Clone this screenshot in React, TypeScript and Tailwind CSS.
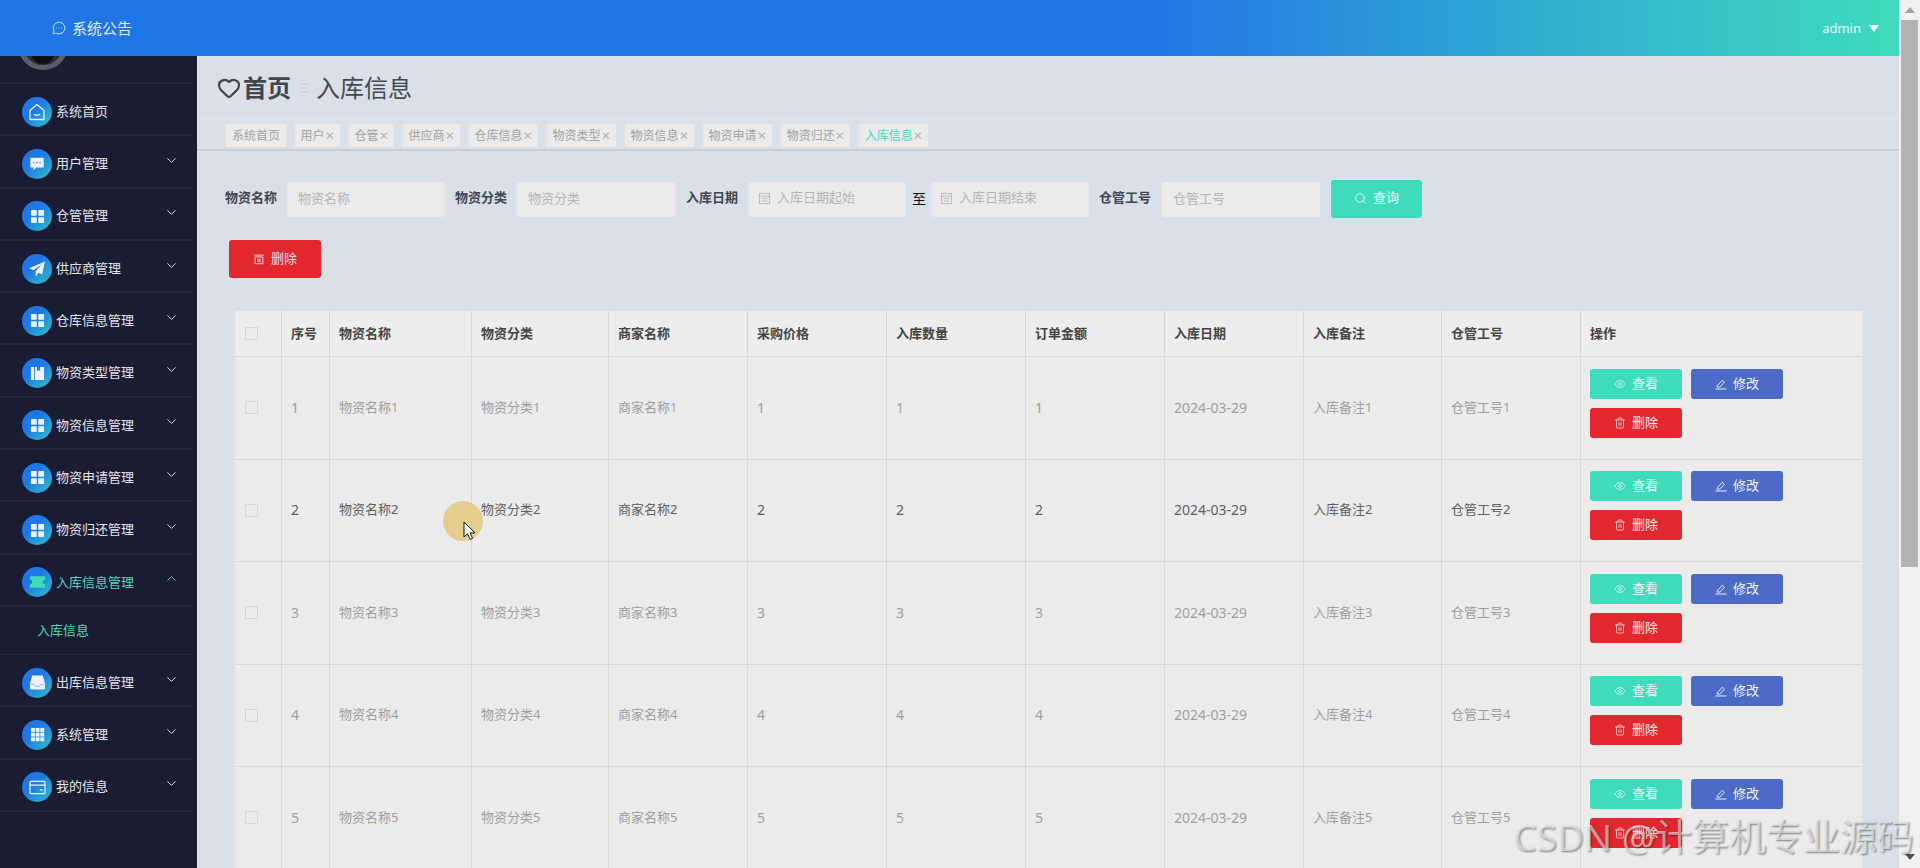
import { ReactNode } from "react"
import { ChevronDown, ChevronUp, Eye, Heart, MessageCircleMore, Search, Trash2 } from "lucide-react"

const GridIcon = () => (
  <svg viewBox="0 0 16 16" className="h-[15px] w-[15px]" fill="#eef3fb">
    <rect x="1" y="1" width="6.2" height="6.2" rx="0.8" />
    <rect x="8.8" y="1" width="6.2" height="6.2" rx="0.8" />
    <rect x="1" y="8.8" width="6.2" height="6.2" rx="0.8" />
    <rect x="8.8" y="8.8" width="6.2" height="6.2" rx="0.8" />
  </svg>
)

const HomeIcon = () => (
  <svg viewBox="0 0 18 18" className="h-[18px] w-[18px]" fill="none" stroke="#eef3fb" strokeWidth="1.3">
    <path d="M9 1.5 16 7.5V16.5H2V7.5Z" strokeLinejoin="round" />
    <path d="M6.5 11.5c1.2 1 3.8 1 5 0" strokeLinecap="round" />
  </svg>
)

const ChatIcon = () => (
  <svg viewBox="0 0 18 18" className="h-[16px] w-[16px]">
    <path d="M1.5 2h15v11H8l-3 3.2V13H1.5Z" fill="#eef3fb" />
    <circle cx="5.5" cy="7.5" r="0.9" fill="#5c8fd8" />
    <circle cx="9" cy="7.5" r="0.9" fill="#5c8fd8" />
    <circle cx="12.5" cy="7.5" r="0.9" fill="#5c8fd8" />
  </svg>
)

const PlaneIcon = () => (
  <svg viewBox="0 0 18 18" className="h-[18px] w-[18px]" fill="#eef3fb">
    <path d="M17 1.5 1 8.2l4.6 2.1L14 4.2 7.6 11.3v5.2l2.9-3.7 3.6 1.8Z" />
  </svg>
)

const BookIcon = () => (
  <svg viewBox="0 0 16 16" className="h-[15px] w-[15px]" fill="#eef3fb">
    <path d="M1 1h3.4v14H1Z" />
    <path d="M5.4 1h2v4.5l1.7-1.3 1.7 1.3V1H15v14H5.4Z" />
  </svg>
)

const TicketIcon = () => (
  <svg viewBox="0 0 18 14" className="h-[14px] w-[17px]" fill="#3edcbc">
    <path d="M1 1h16v3.5a2.5 2.5 0 0 0 0 5V13H1V9.5a2.5 2.5 0 0 0 0-5Z" />
  </svg>
)

const InboxIcon = () => (
  <svg viewBox="0 0 18 18" className="h-[17px] w-[17px]" fill="#eef3fb">
    <path d="M3.4 1.5h11.2L17 10v5a1.5 1.5 0 0 1-1.5 1.5h-13A1.5 1.5 0 0 1 1 15v-5Z" />
    <path d="M1.5 11h4l1 2h5l1-2h4" fill="none" stroke="#7aa7e0" strokeWidth="0.8" />
  </svg>
)

const NineIcon = () => (
  <svg viewBox="0 0 16 16" className="h-[15px] w-[15px]" fill="#eef3fb">
    {[1, 6, 11].map((y) =>
      [1, 6, 11].map((x) => <rect key={`${x}-${y}`} x={x} y={y} width="4.2" height="4.2" />)
    )}
  </svg>
)

const CardIcon = () => (
  <svg viewBox="0 0 18 16" className="h-[15px] w-[17px]" fill="none" stroke="#eef3fb" strokeWidth="1.3">
    <rect x="1" y="1.5" width="16" height="13" rx="1" />
    <path d="M1 5.5h16M11.5 10.5h3" />
  </svg>
)

const PenIcon = () => (
  <svg viewBox="0 0 14 14" className="h-[12px] w-[12px]" fill="none" stroke="currentColor" strokeWidth="1.1">
    <path d="M2.5 9.2 8.6 2.6l2.4 2.2L5.6 10.6H2.4Z" strokeLinejoin="round" />
    <path d="M1 12.8h12" strokeLinecap="round" />
  </svg>
)

const BinIcon = () => (
  <svg viewBox="0 0 14 14" className="h-[12px] w-[12px]" fill="none" stroke="currentColor" strokeWidth="1.1">
    <path d="M1.5 2.5h11M2.5 4.5h9v8h-9Z" />
    <path d="M5 6.5h4v4H5Z" fill="currentColor" stroke="none" opacity="0.7" />
  </svg>
)

const DateIcon = () => (
  <svg viewBox="0 0 14 14" className="h-[13px] w-[13px] shrink-0" fill="none" stroke="#b8b8b8" strokeWidth="1">
    <rect x="1.5" y="1.5" width="11" height="11" />
    <path d="M1.5 4.5h11M4 7h6M4 9.7h6" />
  </svg>
)

const menus: { label: string; icon: ReactNode; open?: boolean; leaf?: boolean }[] = [
  { label: "系统首页", icon: <HomeIcon />, leaf: true },
  { label: "用户管理", icon: <ChatIcon /> },
  { label: "仓管管理", icon: <GridIcon /> },
  { label: "供应商管理", icon: <PlaneIcon /> },
  { label: "仓库信息管理", icon: <GridIcon /> },
  { label: "物资类型管理", icon: <BookIcon /> },
  { label: "物资信息管理", icon: <GridIcon /> },
  { label: "物资申请管理", icon: <GridIcon /> },
  { label: "物资归还管理", icon: <GridIcon /> },
  { label: "入库信息管理", icon: <TicketIcon />, open: true },
  { label: "出库信息管理", icon: <InboxIcon /> },
  { label: "系统管理", icon: <NineIcon /> },
  { label: "我的信息", icon: <CardIcon /> },
]

const tabs = ["用户", "仓管", "供应商", "仓库信息", "物资类型", "物资信息", "物资申请", "物资归还"]

const columns = ["物资名称", "物资分类", "商家名称", "采购价格", "入库数量", "订单金额", "入库日期", "入库备注", "仓管工号"]

function MenuItem({ item }: { item: (typeof menus)[number] }) {
  return (
    <>
      <div className="flex h-[52.3px] shrink-0 items-center border-b-2 border-[#24263e] pl-[22px] pr-[14px] pt-[5px]">
        <span className="flex h-[30px] w-[30px] shrink-0 items-center justify-center rounded-full bg-gradient-to-br from-[#2176e6] from-40% to-[#3cc0c0]">
          {item.icon}
        </span>
        <span className={`ml-[4px] flex-1 text-[13px] ${item.open ? "text-[#4fd8b8]" : "text-[#e4e6ec]"}`}>
          {item.label}
        </span>
        {item.open ? (
          <ChevronUp className="-mt-[7px] h-[15px] w-[15px] text-[#4fd8b8]" strokeWidth={1.6} />
        ) : item.leaf ? null : (
          <ChevronDown className="-mt-[7px] h-[15px] w-[15px] text-[#d5d7e0]" strokeWidth={1.6} />
        )}
      </div>
      {item.open && (
        <div className="flex h-[48px] shrink-0 items-center border-b border-[#24263e] pl-[37px] text-[13px] text-[#4fd8b8]">
          入库信息
        </div>
      )}
    </>
  )
}

function Sidebar() {
  return (
    <aside className="flex w-[197px] shrink-0 flex-col overflow-hidden bg-[#1a1c33] pr-[4px]">
      <div className="relative h-[28px] shrink-0 overflow-hidden border-b-2 border-[#24263e]">
        <div className="absolute -top-[36px] left-[18px] flex h-[50px] w-[50px] items-center justify-center rounded-full border-[5px] border-[#5b5c68] bg-[#2b2b30]">
          <div className="mt-[8px] h-[30px] w-[24px] rounded-full bg-[#0e0e10]" />
        </div>
      </div>
      {menus.map((m) => (
        <MenuItem key={m.label} item={m} />
      ))}
    </aside>
  )
}

function Tab({ label, active, closable = true }: { label: string; active?: boolean; closable?: boolean }) {
  return (
    <div
      className={`flex h-[24px] items-center border-x border-t border-[#dcdfe4] bg-[#ebebeb] pl-[6px] text-[12px] ${
        closable ? "pr-[5px]" : "pr-[6px]"
      } ${active ? "text-[#3edcbc]" : "text-[#a3a3a3]"}`}
    >
      {label}
      {closable && <span className="w-[10.5px] text-center text-[15px] leading-none text-[#b0b0b0]">×</span>}
    </div>
  )
}

function Field({ label, placeholder, className }: { label: string; placeholder: string; className: string }) {
  return (
    <>
      <label className={`pb-[2px] text-[13px] font-bold text-[#3f4650] ${className}`}>{label}</label>
      <input
        readOnly
        placeholder={placeholder}
        className="h-[35px] w-[158px] rounded-[3px] bg-[#ebebeb] px-[11px] pb-[2px] text-[13px] outline-none placeholder:text-[#b5b5b5]"
      />
    </>
  )
}

function DateBox({ text, className }: { text: string; className: string }) {
  return (
    <div className={`flex h-[35px] items-center gap-[6px] rounded-[3px] bg-[#ebebeb] px-[9px] pb-[2px] text-[13px] text-[#b5b5b5] ${className}`}>
      <DateIcon />
      {text}
    </div>
  )
}

function ActionButton({ color, icon, label }: { color: string; icon: ReactNode; label: string }) {
  return (
    <button className={`flex h-[30px] w-[92px] items-center justify-center gap-[6px] rounded-[3px] text-[13px] text-[#f3f3f3] ${color}`}>
      {icon}
      {label}
    </button>
  )
}

function cellValue(col: string, n: number) {
  if (col === "入库日期") return <span className="text-[14px]">2024-03-29</span>
  if (["采购价格", "入库数量", "订单金额"].includes(col)) return <span className="text-[14px]">{n}</span>
  return `${col}${n}`
}

function DataTable() {
  const rows = [1, 2, 3, 4, 5]
  return (
    <table className="ml-[38px] w-[1626px] table-fixed border-collapse bg-[#ebebeb] text-left text-[13px]">
      <colgroup>
        <col className="w-[46px]" />
        <col className="w-[48px]" />
        <col className="w-[142px]" />
        <col className="w-[137px]" />
        <col className="w-[139px]" />
        <col className="w-[139px]" />
        <col className="w-[139px]" />
        <col className="w-[139px]" />
        <col className="w-[139px]" />
        <col className="w-[138px]" />
        <col className="w-[139px]" />
        <col className="w-[281px]" />
      </colgroup>
      <thead>
        <tr className="h-[45px] bg-[#ededed]">
          <th className="border-x border-b border-[#d8d8d8] border-l-transparent px-[9px] font-normal">
            <span className="block h-[13px] w-[13px] border border-[#d6d6d6]" />
          </th>
          <th className="border-x border-b border-[#d8d8d8] px-[9px] font-bold text-[#444]">序号</th>
          {columns.map((c) => (
            <th key={c} className="border-x border-b border-[#d8d8d8] px-[9px] font-bold text-[#444]">
              {c}
            </th>
          ))}
          <th className="border-b border-l border-[#d8d8d8] px-[9px] font-bold text-[#444]">操作</th>
        </tr>
      </thead>
      <tbody>
        {rows.map((n) => (
          <tr key={n} className={`${n % 2 ? "h-[103px]" : "h-[102px]"} ${n === 2 ? "text-[#606060]" : "text-[#a0a0a0]"}`}>
            <td className="border-x border-b border-[#d8d8d8] border-l-transparent px-[9px]">
              <span className="block h-[13px] w-[13px] border border-[#d6d6d6]" />
            </td>
            <td className="border-x border-b border-[#d8d8d8] px-[9px]">
              <span className="text-[14px]">{n}</span>
            </td>
            {columns.map((c) => (
              <td key={c} className="border-x border-b border-[#d8d8d8] px-[9px]">
                {cellValue(c, n)}
              </td>
            ))}
            <td className="border-b border-l border-[#d8d8d8] px-[9px] pb-[9px]">
              <div className="flex flex-wrap gap-x-[9px] gap-y-[9px]">
                <ActionButton color="bg-[#3edcbc]" icon={<Eye className="h-[12px] w-[12px]" strokeWidth={1.4} />} label="查看" />
                <ActionButton color="bg-[#4c6bc6]" icon={<PenIcon />} label="修改" />
                <ActionButton color="bg-[#e3272f]" icon={<Trash2 className="h-[12px] w-[12px]" strokeWidth={1.4} />} label="删除" />
              </div>
            </td>
          </tr>
        ))}
      </tbody>
    </table>
  )
}

function Scrollbar() {
  return (
    <div className="flex w-[21px] shrink-0 flex-col items-center bg-[#f1f1f1]">
      <div className="mt-[7px] h-0 w-0 border-x-[5px] border-b-[6px] border-x-transparent border-b-[#a3a3a3]" />
      <div className="mt-[7px] h-[547px] w-[17px] bg-[#b3b3b3]" />
      <div className="mt-auto mb-[8px] h-0 w-0 border-x-[5px] border-t-[6px] border-x-transparent border-t-[#505050]" />
    </div>
  )
}

export default function App() {
  return (
    <div className="relative flex h-screen w-full overflow-hidden bg-[#d9e0e8] font-['Noto_Sans','Noto_Sans_CJK_SC',sans-serif]">
      <div className="flex min-w-0 flex-1 flex-col">
        <header className="flex h-[56px] shrink-0 items-center justify-between bg-linear-to-r/srgb from-[#2176e6] from-60% to-[#3edcbc] pl-[52px] pr-[20px]">
          <div className="flex items-center gap-[6px] text-[15px] text-[#dcebff]">
            <MessageCircleMore className="h-[14px] w-[14px]" strokeWidth={1.5} />
            系统公告
          </div>
          <div className="flex items-center gap-[8px] pt-[1px] text-[13px] text-[#e8fbff]">
            admin
            <span className="h-0 w-0 border-x-[5px] border-t-[7px] border-x-transparent border-t-[#eefcff]" />
          </div>
        </header>
        <div className="flex min-h-0 flex-1">
          <Sidebar />
          <main className="min-w-0 flex-1 overflow-hidden">
            <div className="flex h-[62px] items-center pl-[20px] pt-[2px] text-[#3f4650]">
              <Heart className="h-[24px] w-[24px]" strokeWidth={2.2} />
              <span className="ml-[2px] text-[24px] font-bold">首页</span>
              <svg viewBox="0 0 10 12" className="ml-[9px] h-[12px] w-[10px]" stroke="#c6ccd4" strokeWidth="1">
                <path d="M1 2h8M1 6h8M1 10h8" />
              </svg>
              <span className="ml-[6px] text-[24px] text-[#444b55]">入库信息</span>
            </div>
            <div className="flex h-[33px] items-end gap-[6.5px] border-t border-b-2 border-[#e3e7ec] border-b-[#c9ced6] pb-[2px] pl-[28px]">
              <Tab label="系统首页" closable={false} />
              {tabs.map((t) => (
                <Tab key={t} label={t} />
              ))}
              <Tab label="入库信息" active />
            </div>
            <div className="mt-[29px] flex h-[38px] items-center pl-[28px]">
              <Field label="物资名称" placeholder="物资名称" className="mr-[10px]" />
              <Field label="物资分类" placeholder="物资分类" className="ml-[10px] mr-[10px]" />
              <label className="ml-[11px] mr-[11px] pb-[2px] text-[13px] font-bold text-[#3f4650]">入库日期</label>
              <DateBox text="入库日期起始" className="w-[157px]" />
              <span className="ml-[6px] mr-[5px] pb-[2px] text-[14px] text-[#111]">至</span>
              <DateBox text="入库日期结束" className="w-[158px]" />
              <Field label="仓管工号" placeholder="仓管工号" className="ml-[10px] mr-[11px]" />
              <button className="ml-[11px] flex h-[38px] w-[91px] items-center justify-center gap-[6px] rounded-[3px] bg-[#3edcbc] pb-[2px] text-[13px] text-[#eefbf8]">
                <Search className="h-[13px] w-[13px]" strokeWidth={1.5} />
                查询
              </button>
            </div>
            <div className="mt-[22px] pl-[32px]">
              <button className="flex h-[38px] w-[92px] items-center justify-center gap-[6px] rounded-[3px] bg-[#e3272f] text-[13px] text-[#f7dfe6]">
                <BinIcon />
                删除
              </button>
            </div>
            <div className="mt-[33px]">
              <DataTable />
            </div>
          </main>
        </div>
      </div>
      <Scrollbar />

      {/* recording overlays: cursor highlight and watermark */}
      <div className="absolute left-[443px] top-[501px] h-[40px] w-[40px] rounded-full bg-[#e5c77f]/85" />
      <svg viewBox="0 0 14 20" className="absolute left-[463px] top-[521px] h-[20px] w-[14px]">
        <path d="M1 1v15l3.6-3.2 2.6 5.6 2.4-1.1-2.6-5.4H12Z" fill="#fff" stroke="#111" strokeWidth="1" />
      </svg>
      <div className="absolute right-[6px] top-[812px] whitespace-nowrap text-[37px] leading-[50px] text-white/55 [text-shadow:1px_1px_2px_rgba(0,0,0,0.45)]">
        CSDN @计算机专业源码
      </div>
    </div>
  )
}
